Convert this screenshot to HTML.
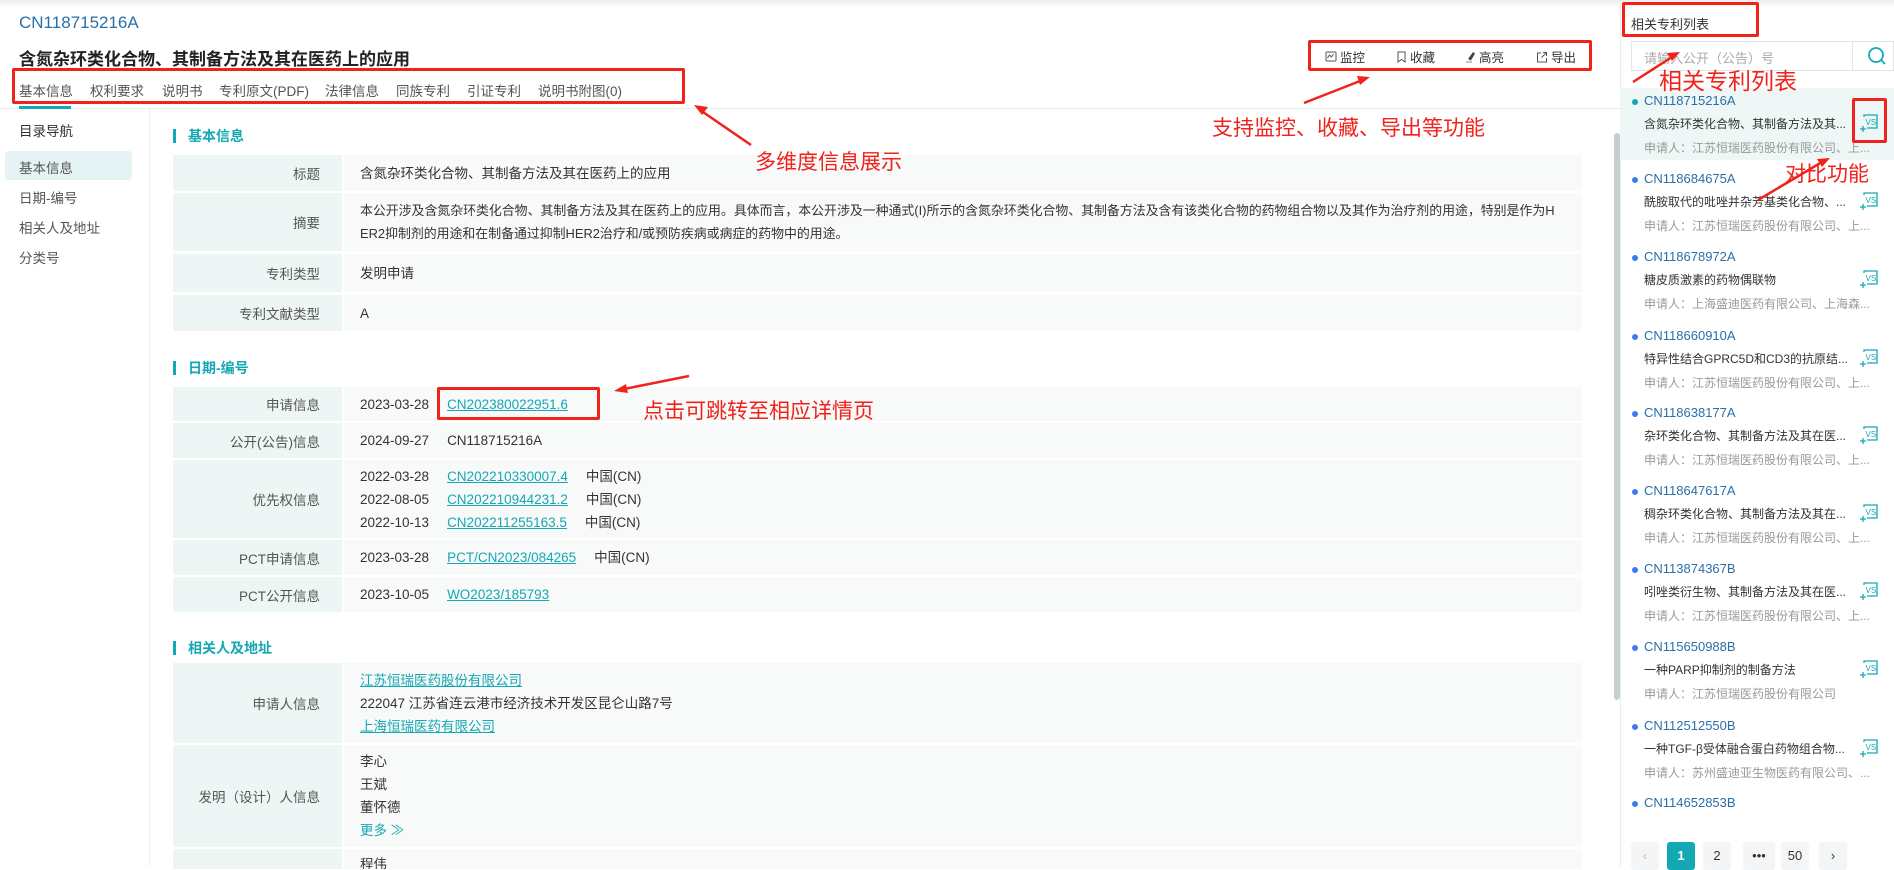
<!DOCTYPE html>
<html><head><meta charset="utf-8"><style>
*{margin:0;padding:0;box-sizing:border-box}
body{width:1894px;height:866px;overflow:hidden;background:#fff;font-family:"Liberation Sans","Noto Sans CJK SC",sans-serif;color:#333;position:relative;font-size:14px}
.a{position:absolute;white-space:nowrap}
.teal{color:#14a8b4}
.lnk{color:#14a8b4;text-decoration:underline}
.tab{position:absolute;top:80px;font-size:13.5px;color:#555;white-space:nowrap}
.nav{position:absolute;left:19px;font-size:13.5px;color:#555}
.sec{position:absolute;left:173px;font-size:14px;color:#14a8b4;font-weight:bold;padding-left:12px;border-left:3px solid #14a8b4;line-height:14px}
.lab{position:absolute;left:173px;width:169px;background:#eef5f5;text-align:right;padding-right:22px;font-size:13.5px;color:#555;display:flex;align-items:center;justify-content:flex-end}
.val{position:absolute;left:344px;width:1238px;background:#f8f9f9;padding-left:16px;font-size:13.5px;color:#333;display:flex;flex-direction:column;justify-content:center;white-space:nowrap;overflow:hidden}
.val div{line-height:23px}
.sp{display:inline-block;width:18px}
.red{color:#f0221b;position:absolute;white-space:nowrap;font-size:21px}
.rbox{position:absolute;border:3px solid #f0221b;border-radius:2px}
.it{position:absolute;left:1632px;width:262px}
.it .dot{position:absolute;left:0;top:6px;width:6px;height:6px;border-radius:50%;background:#3b7cf0}
.it .cn{position:absolute;left:12px;top:0;font-size:13px;color:#2a6fa8}
.it .ti{position:absolute;left:12px;top:22px;font-size:12px;color:#333}
.it .ap{position:absolute;left:12px;top:46px;font-size:12px;color:#999}
.it svg{position:absolute;left:227px;top:20px}
.pg{position:absolute;top:842px;width:28px;height:28px;border-radius:3px;background:#f4f5f6;text-align:center;line-height:28px;font-size:13px;color:#333}
</style></head><body>
<div class="a" style="left:0;top:0;width:1894px;height:8px;background:linear-gradient(#eee,#fff)"></div>
<div class="a" style="left:19px;top:13px;font-size:17px;color:#2a6fa8">CN118715216A</div>
<div class="a" style="left:19px;top:45px;font-size:17px;font-weight:bold;color:#222">含氮杂环类化合物、其制备方法及其在医药上的应用</div>
<div class="tab teal" style="left:19px">基本信息</div>
<div class="tab" style="left:90px">权利要求</div>
<div class="tab" style="left:162px">说明书</div>
<div class="tab" style="left:219px">专利原文(PDF)</div>
<div class="tab" style="left:325px">法律信息</div>
<div class="tab" style="left:396px">同族专利</div>
<div class="tab" style="left:467px">引证专利</div>
<div class="tab" style="left:538px">说明书附图(0)</div>
<div class="a" style="left:0;top:108px;width:1620px;height:1px;background:#e8ecec"></div>
<div class="a" style="left:19px;top:106px;width:52px;height:3px;background:#14a8b4"></div>
<div class="rbox" style="left:12px;top:68px;width:673px;height:36px"></div>

<div class="a" style="left:1325px;top:47px;font-size:12.5px;color:#333"><svg width="12" height="12" viewBox="0 0 12 12" style="vertical-align:-1px;margin-right:3px"><rect x="1" y="1" width="10" height="9" rx="1" fill="none" stroke="#555"/><path d="M2.5 7l2-3 2 2 2-3" fill="none" stroke="#555"/></svg>监控</div>
<div class="a" style="left:1396px;top:47px;font-size:12.5px;color:#333"><svg width="11" height="12" viewBox="0 0 11 12" style="vertical-align:-1px;margin-right:3px"><path d="M2 1h7v10l-3.5-2.5L2 11z" fill="none" stroke="#555"/></svg>收藏</div>
<div class="a" style="left:1465px;top:47px;font-size:12.5px;color:#333"><svg width="11" height="12" viewBox="0 0 11 12" style="vertical-align:-1px;margin-right:3px"><path d="M3 8l5-7 2 1.5-4 7z" fill="#444"/><path d="M1 11h6" stroke="#888"/></svg>高亮</div>
<div class="a" style="left:1536px;top:47px;font-size:12.5px;color:#333"><svg width="12" height="12" viewBox="0 0 12 12" style="vertical-align:-1px;margin-right:3px"><path d="M5 2H1.5v9h9V7M7 1.5h3.5V5M10.5 1.5L5.5 6.5" fill="none" stroke="#555"/></svg>导出</div>
<div class="rbox" style="left:1308px;top:40px;width:284px;height:31px"></div>

<div class="a" style="left:149px;top:109px;width:1px;height:757px;background:#eceff0"></div>
<div class="nav" style="top:120px;color:#333">目录导航</div>
<div class="a" style="left:5px;top:151px;width:127px;height:29px;background:#e6f3f4;border-radius:3px"></div>
<div class="nav teal" style="top:157px">基本信息</div>
<div class="nav" style="top:187px">日期-编号</div>
<div class="nav" style="top:217px">相关人及地址</div>
<div class="nav" style="top:247px">分类号</div>

<div class="sec" style="top:129px">基本信息</div>
<div class="lab" style="top:155px;height:36px">标题</div><div class="val" style="top:155px;height:36px"><div>含氮杂环类化合物、其制备方法及其在医药上的应用</div></div>
<div class="lab" style="top:193px;height:58px">摘要</div><div class="val" style="top:193px;height:58px;font-size:12.9px"><div>本公开涉及含氮杂环类化合物、其制备方法及其在医药上的应用。具体而言，本公开涉及一种通式(I)所示的含氮杂环类化合物、其制备方法及含有该类化合物的药物组合物以及其作为治疗剂的用途，特别是作为H</div><div>ER2抑制剂的用途和在制备通过抑制HER2治疗和/或预防疾病或病症的药物中的用途。</div></div>
<div class="lab" style="top:254px;height:38px">专利类型</div><div class="val" style="top:254px;height:38px"><div>发明申请</div></div>
<div class="lab" style="top:295px;height:36px">专利文献类型</div><div class="val" style="top:295px;height:36px"><div>A</div></div>

<div class="sec" style="top:361px">日期-编号</div>
<div class="lab" style="top:387px;height:34px">申请信息</div><div class="val" style="top:387px;height:34px"><div>2023-03-28<span class="sp"></span><span class="lnk">CN202380022951.6</span></div></div>
<div class="lab" style="top:423px;height:35px">公开(公告)信息</div><div class="val" style="top:423px;height:35px"><div>2024-09-27<span class="sp"></span>CN118715216A</div></div>
<div class="lab" style="top:460px;height:78px">优先权信息</div><div class="val" style="top:460px;height:78px"><div>2022-03-28<span class="sp"></span><span class="lnk">CN202210330007.4</span><span class="sp"></span>中国(CN)</div><div>2022-08-05<span class="sp"></span><span class="lnk">CN202210944231.2</span><span class="sp"></span>中国(CN)</div><div>2022-10-13<span class="sp"></span><span class="lnk">CN202211255163.5</span><span class="sp"></span>中国(CN)</div></div>
<div class="lab" style="top:540px;height:35px">PCT申请信息</div><div class="val" style="top:540px;height:35px"><div>2023-03-28<span class="sp"></span><span class="lnk">PCT/CN2023/084265</span><span class="sp"></span>中国(CN)</div></div>
<div class="lab" style="top:577px;height:35px">PCT公开信息</div><div class="val" style="top:577px;height:35px"><div>2023-10-05<span class="sp"></span><span class="lnk">WO2023/185793</span></div></div>

<div class="sec" style="top:641px">相关人及地址</div>
<div class="lab" style="top:663px;height:80px">申请人信息</div><div class="val" style="top:663px;height:80px"><div class="lnk">江苏恒瑞医药股份有限公司</div><div>222047 江苏省连云港市经济技术开发区昆仑山路7号</div><div class="lnk">上海恒瑞医药有限公司</div></div>
<div class="lab" style="top:745px;height:102px">发明（设计）人信息</div><div class="val" style="top:745px;height:102px"><div>李心</div><div>王斌</div><div>董怀德</div><div class="teal">更多 ≫</div></div>
<div class="lab" style="top:849px;height:20px"></div><div class="val" style="top:849px;height:20px;justify-content:flex-start"><div style="margin-top:4px">程伟</div></div>

<div class="a" style="left:1614px;top:133px;width:6px;height:567px;background:#c5cfcf;border-radius:3px"></div>

<div class="a" style="left:1620px;top:0;width:1px;height:866px;background:#e8ecec"></div>
<div class="a" style="left:1631px;top:14px;font-size:13px;color:#333">相关专利列表</div>
<div class="rbox" style="left:1622px;top:2px;width:137px;height:35px"></div>
<div class="a" style="left:1631px;top:41px;width:222px;height:30px;border:1px solid #e3e6e8;font-size:13px;color:#aaa;padding:6px 0 0 12px">请输入公开（公告）号</div>
<div class="a" style="left:1853px;top:41px;width:41px;height:30px;border:1px solid #e3e6e8;border-left:none"></div>
<svg class="a" style="left:1866px;top:45px" width="22" height="22" viewBox="0 0 22 22"><circle cx="10" cy="10" r="7" fill="none" stroke="#14a8b4" stroke-width="1.8"/><path d="M15 15l4 4" stroke="#14a8b4" stroke-width="1.8"/></svg>
<div class="a" style="left:1620px;top:88px;width:274px;height:72px;background:#eef6f6"></div>

<div class="it" style="top:93px"><div class="dot" style="background:#14a8b4"></div><div class="cn">CN118715216A</div><div class="ti">含氮杂环类化合物、其制备方法及其...</div><div class="ap">申请人：江苏恒瑞医药股份有限公司、上...</div><svg width="20" height="20" viewBox="0 0 20 20"><path d="M5 4V2h13v13H8" fill="none" stroke="#14a8b4" stroke-width="1.3"/><text x="6.5" y="12" font-size="8" font-family="Liberation Sans" fill="#14a8b4">VS</text><path d="M1 16h6M4 13v6" stroke="#14a8b4" stroke-width="1.3"/></svg></div>
<div class="it" style="top:171px"><div class="dot"></div><div class="cn">CN118684675A</div><div class="ti">酰胺取代的吡唑并杂芳基类化合物、...</div><div class="ap">申请人：江苏恒瑞医药股份有限公司、上...</div><svg width="20" height="20" viewBox="0 0 20 20"><path d="M5 4V2h13v13H8" fill="none" stroke="#14a8b4" stroke-width="1.3"/><text x="6.5" y="12" font-size="8" font-family="Liberation Sans" fill="#14a8b4">VS</text><path d="M1 16h6M4 13v6" stroke="#14a8b4" stroke-width="1.3"/></svg></div>
<div class="it" style="top:249px"><div class="dot"></div><div class="cn">CN118678972A</div><div class="ti">糖皮质激素的药物偶联物</div><div class="ap">申请人：上海盛迪医药有限公司、上海森...</div><svg width="20" height="20" viewBox="0 0 20 20"><path d="M5 4V2h13v13H8" fill="none" stroke="#14a8b4" stroke-width="1.3"/><text x="6.5" y="12" font-size="8" font-family="Liberation Sans" fill="#14a8b4">VS</text><path d="M1 16h6M4 13v6" stroke="#14a8b4" stroke-width="1.3"/></svg></div>
<div class="it" style="top:328px"><div class="dot"></div><div class="cn">CN118660910A</div><div class="ti">特异性结合GPRC5D和CD3的抗原结...</div><div class="ap">申请人：江苏恒瑞医药股份有限公司、上...</div><svg width="20" height="20" viewBox="0 0 20 20"><path d="M5 4V2h13v13H8" fill="none" stroke="#14a8b4" stroke-width="1.3"/><text x="6.5" y="12" font-size="8" font-family="Liberation Sans" fill="#14a8b4">VS</text><path d="M1 16h6M4 13v6" stroke="#14a8b4" stroke-width="1.3"/></svg></div>
<div class="it" style="top:405px"><div class="dot"></div><div class="cn">CN118638177A</div><div class="ti">杂环类化合物、其制备方法及其在医...</div><div class="ap">申请人：江苏恒瑞医药股份有限公司、上...</div><svg width="20" height="20" viewBox="0 0 20 20"><path d="M5 4V2h13v13H8" fill="none" stroke="#14a8b4" stroke-width="1.3"/><text x="6.5" y="12" font-size="8" font-family="Liberation Sans" fill="#14a8b4">VS</text><path d="M1 16h6M4 13v6" stroke="#14a8b4" stroke-width="1.3"/></svg></div>
<div class="it" style="top:483px"><div class="dot"></div><div class="cn">CN118647617A</div><div class="ti">稠杂环类化合物、其制备方法及其在...</div><div class="ap">申请人：江苏恒瑞医药股份有限公司、上...</div><svg width="20" height="20" viewBox="0 0 20 20"><path d="M5 4V2h13v13H8" fill="none" stroke="#14a8b4" stroke-width="1.3"/><text x="6.5" y="12" font-size="8" font-family="Liberation Sans" fill="#14a8b4">VS</text><path d="M1 16h6M4 13v6" stroke="#14a8b4" stroke-width="1.3"/></svg></div>
<div class="it" style="top:561px"><div class="dot"></div><div class="cn">CN113874367B</div><div class="ti">吲唑类衍生物、其制备方法及其在医...</div><div class="ap">申请人：江苏恒瑞医药股份有限公司、上...</div><svg width="20" height="20" viewBox="0 0 20 20"><path d="M5 4V2h13v13H8" fill="none" stroke="#14a8b4" stroke-width="1.3"/><text x="6.5" y="12" font-size="8" font-family="Liberation Sans" fill="#14a8b4">VS</text><path d="M1 16h6M4 13v6" stroke="#14a8b4" stroke-width="1.3"/></svg></div>
<div class="it" style="top:639px"><div class="dot"></div><div class="cn">CN115650988B</div><div class="ti">一种PARP抑制剂的制备方法</div><div class="ap">申请人：江苏恒瑞医药股份有限公司</div><svg width="20" height="20" viewBox="0 0 20 20"><path d="M5 4V2h13v13H8" fill="none" stroke="#14a8b4" stroke-width="1.3"/><text x="6.5" y="12" font-size="8" font-family="Liberation Sans" fill="#14a8b4">VS</text><path d="M1 16h6M4 13v6" stroke="#14a8b4" stroke-width="1.3"/></svg></div>
<div class="it" style="top:718px"><div class="dot"></div><div class="cn">CN112512550B</div><div class="ti">一种TGF-β受体融合蛋白药物组合物...</div><div class="ap">申请人：苏州盛迪亚生物医药有限公司、...</div><svg width="20" height="20" viewBox="0 0 20 20"><path d="M5 4V2h13v13H8" fill="none" stroke="#14a8b4" stroke-width="1.3"/><text x="6.5" y="12" font-size="8" font-family="Liberation Sans" fill="#14a8b4">VS</text><path d="M1 16h6M4 13v6" stroke="#14a8b4" stroke-width="1.3"/></svg></div>
<div class="it" style="top:795px"><div class="dot"></div><div class="cn">CN114652853B</div></div>

<div class="pg" style="left:1631px;color:#bbb">‹</div>
<div class="pg" style="left:1667px;background:#14a8b4;color:#fff;font-weight:bold">1</div>
<div class="pg" style="left:1703px">2</div>
<div class="pg" style="left:1743px;width:32px">•••</div>
<div class="pg" style="left:1781px">50</div>
<div class="pg" style="left:1819px">›</div>

<div class="rbox" style="left:1852px;top:98px;width:35px;height:45px"></div>
<div class="rbox" style="left:437px;top:387px;width:163px;height:33px"></div>
<div class="red" style="left:755px;top:146px">多维度信息展示</div>
<div class="red" style="left:1212px;top:112px">支持监控、收藏、导出等功能</div>
<div class="red" style="left:1659px;top:62px;font-size:23px">相关专利列表</div>
<div class="red" style="left:1785px;top:158px">对比功能</div>
<div class="red" style="left:643px;top:395px">点击可跳转至相应详情页</div>
<svg class="a" style="left:0;top:0" width="1894" height="866">
<g stroke="#f0221b" stroke-width="2.5" fill="#f0221b">
<line x1="751" y1="145" x2="700" y2="110"/><path d="M694 105l14 2-6 8z" stroke="none"/>
<line x1="1304" y1="103" x2="1360" y2="81"/><path d="M1370 77l-13-1 3 9z" stroke="none"/>
<line x1="1633" y1="82" x2="1672" y2="57"/><path d="M1680 52l-13 1 5 8z" stroke="none"/>
<line x1="1758" y1="200" x2="1822" y2="162"/><path d="M1830 158l-13 1 5 8z" stroke="none"/>
<line x1="689" y1="376" x2="624" y2="389"/><path d="M614 391l12-7 2 9z" stroke="none"/>
</g></svg>
</body></html>
